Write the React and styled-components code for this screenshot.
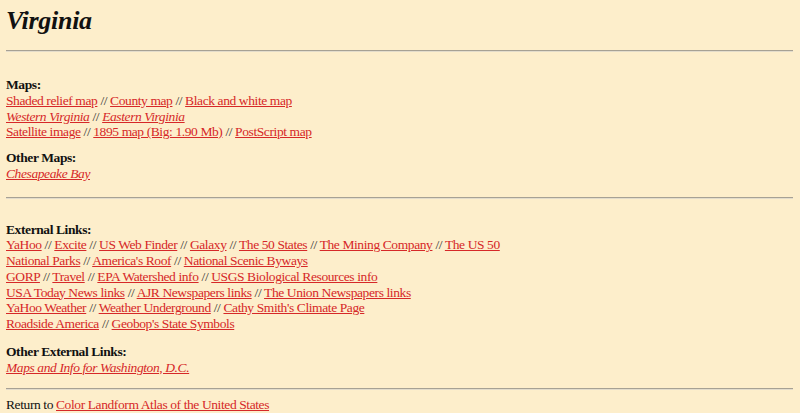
import React from 'react';
import styled, { createGlobalStyle } from 'styled-components';

const GlobalStyle = createGlobalStyle`
  body {
    margin: 0;
    background: #fdeecb;
    font-family: "Liberation Serif", "Times New Roman", serif;
    color: #111;
  }
`;

const Page = styled.div`
  padding: 6px 7px 0 6px;
`;

const Title = styled.h1`
  margin: 0;
  font-size: 26px;
  line-height: 29px;
  letter-spacing: -0.3px;
  font-style: italic;
  font-weight: bold;
  color: #111;
`;

const Rule = styled.hr`
  margin: ${({ $top }) => $top}px 0 ${({ $bottom }) => $bottom}px;
  height: 0;
  border: 0;
  border-top: 1px solid #a7a194;
  border-bottom: 1px solid #e3dccb;
`;

const Section = styled.div`
  font-size: 13.5px;
  line-height: 15.75px;
  letter-spacing: -0.4px;
  margin-bottom: ${({ $gap }) => $gap || 0}px;
`;

const Heading = styled.div`
  font-weight: bold;
`;

const Line = styled.div`
  white-space: nowrap;
`;

const Ref = styled.a`
  color: #d62828;
  text-decoration: underline;
  font-style: ${({ $italic }) => ($italic ? 'italic' : 'normal')};
`;

const Sep = styled.span`
  color: #333;
`;

const LinkRow = ({ items, italic }) => (
  <Line>
    {items.map((t, i) => (
      <React.Fragment key={t}>
        {i > 0 && <Sep> // </Sep>}
        <Ref href="#" $italic={italic}>{t}</Ref>
      </React.Fragment>
    ))}
  </Line>
);

const App = () => (
  <>
    <GlobalStyle />
    <Page>
      <Title>Virginia</Title>
      <Rule $top={15} $bottom={25} />

      <Section $gap={10}>
        <Heading>Maps:</Heading>
        <LinkRow items={['Shaded relief map', 'County map', 'Black and white map']} />
        <LinkRow italic items={['Western Virginia', 'Eastern Virginia']} />
        <LinkRow items={['Satellite image', '1895 map (Big: 1.90 Mb)', 'PostScript map']} />
      </Section>

      <Section>
        <Heading>Other Maps:</Heading>
        <LinkRow italic items={['Chesapeake Bay']} />
      </Section>
      <Rule $top={15} $bottom={23} />

      <Section $gap={12}>
        <Heading>External Links:</Heading>
        <LinkRow items={['YaHoo', 'Excite', 'US Web Finder', 'Galaxy', 'The 50 States', 'The Mining Company', 'The US 50']} />
        <LinkRow items={['National Parks', "America's Roof", 'National Scenic Byways']} />
        <LinkRow items={['GORP', 'Travel', 'EPA Watershed info', 'USGS Biological Resources info']} />
        <LinkRow items={['USA Today News links', 'AJR Newspapers links', 'The Union Newspapers links']} />
        <LinkRow items={['YaHoo Weather', 'Weather Underground', "Cathy Smith's Climate Page"]} />
        <LinkRow items={['Roadside America', "Geobop's State Symbols"]} />
      </Section>

      <Section>
        <Heading>Other External Links:</Heading>
        <LinkRow italic items={['Maps and Info for Washington, D.C.']} />
      </Section>
      <Rule $top={13} $bottom={7} />

      <Section>
        <Line>
          Return to <Ref href="#">Color Landform Atlas of the United States</Ref>
        </Line>
      </Section>
    </Page>
  </>
);

export default App;
